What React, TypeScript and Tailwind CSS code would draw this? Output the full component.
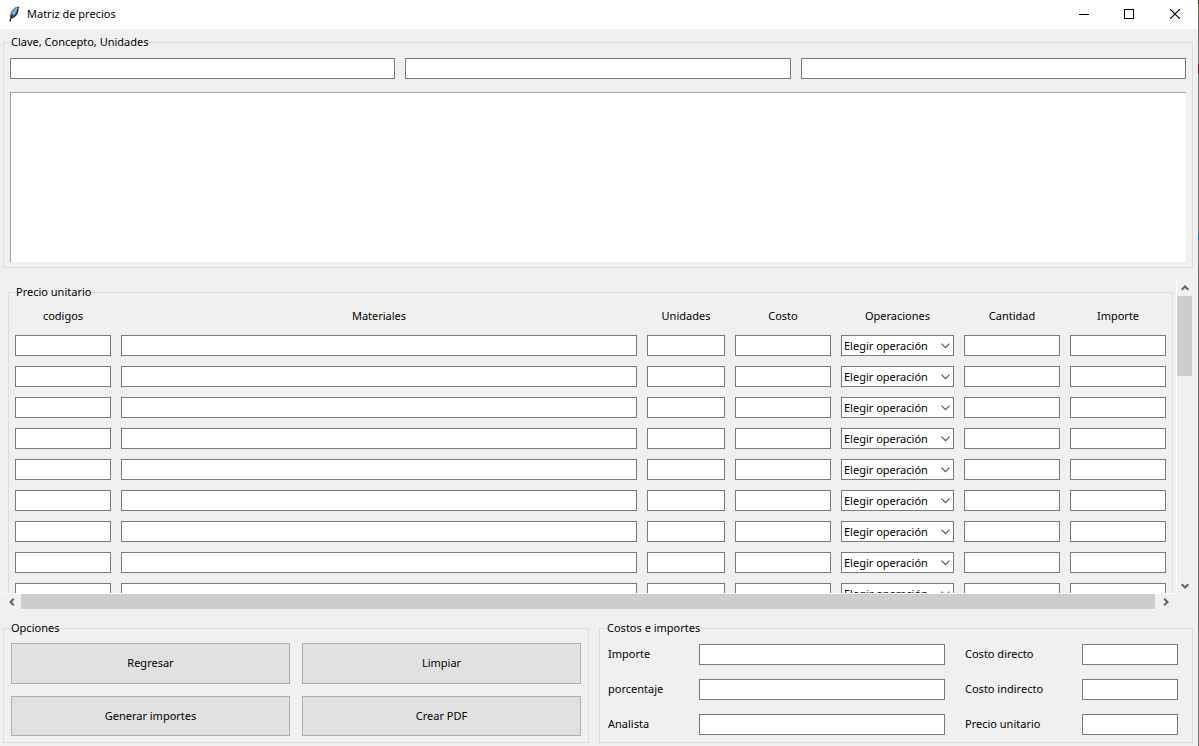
import type { ReactNode } from 'react';
import { useState } from 'react';

const field = 'block h-[21px] w-full min-w-0 border border-[#7a7a7a] bg-white px-1 outline-none focus:border-[#0078d7]';

function Group({ title, className, children }: { title: string; className: string; children: ReactNode }) {
  return (
    <fieldset className={`relative min-w-0 border border-[#dcdcdc] ${className}`}>
      <legend className="absolute -top-[9px] left-[7px] bg-[#f0f0f0] leading-4">{title}</legend>
      {children}
    </fieldset>
  );
}

function Feather() {
  return (
    <svg width="16" height="16" viewBox="0 0 16 16" aria-hidden="true">
      <path d="M12.2 .6C9.4 1.2 6.2 4.2 5.2 7.5L4.4 10.6l1.2 1.2C8.6 10.6 10.6 8 11.4 5z" fill="#5f9fe0" />
      <path d="M9.8 1.4C7.4 3 5.4 5.4 4.6 8.6l-.4 2.6" fill="none" stroke="#3a4450" strokeWidth=".8" />
      <path d="M12.4 .6 11.6 5C10.8 8.4 8.8 10.6 5.8 12" fill="none" stroke="#111" strokeWidth="1.2" />
      <path d="M10.8 2.4 6.4 8.6" stroke="#a9cdf2" strokeWidth=".9" />
      <path d="M6.6 8.4C5.2 10.6 4.4 12.6 4 15.4" fill="none" stroke="#111" strokeWidth="1.3" />
    </svg>
  );
}

function TitleBar() {
  return (
    <header className="flex h-[29px] shrink-0 items-start bg-white">
      <div className="flex h-7 flex-1 items-center gap-[5px] pl-1.5">
        <Feather />
        <h1>Matriz de precios</h1>
      </div>
      <button aria-label="Minimizar" className="flex h-[27px] w-[45px] items-center justify-center">
        <svg width="10" height="10" shapeRendering="crispEdges"><path d="M0 5h10v1H0z" /></svg>
      </button>
      <button aria-label="Maximizar" className="flex h-[27px] w-[46px] items-center justify-center">
        <svg width="10" height="10" shapeRendering="crispEdges"><path d="M.5.5h9v9h-9z" fill="none" stroke="#000" /></svg>
      </button>
      <button aria-label="Cerrar" className="flex h-[27px] w-[46px] items-center justify-center">
        <svg width="10" height="10"><path d="m0 0 10 10M10 0 0 10" stroke="#000" strokeWidth="1.2" /></svg>
      </button>
    </header>
  );
}

function Arrow({ turn, size, label }: { turn: string; size: string; label: string }) {
  return (
    <button aria-label={label} className={`flex shrink-0 items-center justify-center ${size}`}>
      <svg width="8" height="8" viewBox="0 0 8 8" className={turn}>
        <path d="M.7 5.8 4 2.5l3.3 3.3" fill="none" stroke="#606060" strokeWidth="2" />
      </svg>
    </button>
  );
}

const grid =
  'grid grid-cols-[96px_minmax(0,1fr)_78px_96px_113px_96px_96px] gap-x-2.5';
const columns = ['codigos', 'Materiales', 'Unidades', 'Costo', 'Operaciones', 'Cantidad', 'Importe'];
const operations = ['Elegir operación', 'Suma', 'Resta', 'Multiplicación', 'División'];

function Operation({ row }: { row: number }) {
  return (
    <div className="relative">
      <select
        aria-label={`Operaciones ${row}`}
        className="block h-[21px] w-full appearance-none border border-[#7a7a7a] bg-white pl-0.5 leading-[19px] outline-none"
      >
        {operations.map((o) => (
          <option key={o}>{o}</option>
        ))}
      </select>
      <svg width="9" height="6" className="pointer-events-none absolute top-2 right-1">
        <path d="M.5.7 4.5 4.7l4-4" fill="none" stroke="#505050" strokeWidth="1.1" />
      </svg>
    </div>
  );
}

function PriceTable() {
  return (
    <section className="flex h-[341px] shrink-0 flex-col pt-[11px] pr-1.5 pl-[3px]">
      <div className="flex min-h-0 flex-1">
        <div className="min-w-0 flex-1 overflow-hidden border-r border-b border-white pt-[13px] pr-[3px] pl-[5px]">
          <Group title="Precio unitario" className="px-1.5 pt-[13px] pb-2.5">
            <div className={`${grid} mb-[10px] text-center leading-[19px]`}>
              {columns.map((c) => (
                <span key={c}>{c}</span>
              ))}
            </div>
            <div className="flex flex-col gap-2.5">
              {Array.from({ length: 30 }, (_, i) => (
                <div key={i} className={grid}>
                  {columns.map((c) =>
                    c === 'Operaciones' ? (
                      <Operation key={c} row={i + 1} />
                    ) : (
                      <input key={c} aria-label={`${c} ${i + 1}`} className={field} />
                    ),
                  )}
                </div>
              ))}
            </div>
          </Group>
        </div>
        <div className="flex w-[15px] shrink-0 flex-col items-center">
          <Arrow label="Subir" size="h-[17px] w-full" turn="rotate-0" />
          <div className="h-20 w-full bg-[#cdcdcd]" />
          <div className="flex-1" />
          <Arrow label="Bajar" size="h-[17px] w-full" turn="rotate-180" />
        </div>
      </div>
      <div className="mr-[15px] flex h-[15px] shrink-0 items-center">
        <Arrow label="Izquierda" size="h-full w-[18px]" turn="-rotate-90" />
        <div className="h-full flex-1 bg-[#cdcdcd]" />
        <Arrow label="Derecha" size="h-full w-[22px]" turn="rotate-90" />
      </div>
    </section>
  );
}

const actions = ['Regresar', 'Limpiar', 'Generar importes', 'Crear PDF'];
const totals = [
  ['Importe', 'Costo directo'],
  ['porcentaje', 'Costo indirecto'],
  ['Analista', 'Precio unitario'],
];

export default function App() {
  const [notes, setNotes] = useState('');
  return (
    <div className="flex min-h-screen bg-[#f0f0f0] font-['Noto_Sans','Open_Sans',sans-serif] text-[11px] text-black">
      <main className="flex min-w-0 flex-1 flex-col">
        <TitleBar />
        <Group title="Clave, Concepto, Unidades" className="mt-[13px] mr-[5px] ml-[3px] px-1.5 pt-[15px] pb-[5px]">
          <div className="grid grid-cols-3 gap-2.5">
            <input aria-label="Clave" className={field} />
            <input aria-label="Concepto" className={field} />
            <input aria-label="Unidades" className={field} />
          </div>
          <textarea
            aria-label="Descripción"
            value={notes}
            onChange={(e) => setNotes(e.target.value)}
            className="mt-[13px] block h-[170px] w-full resize-none border-t border-l border-[#a0a0a0] bg-white p-1 outline-none"
          />
        </Group>
        <PriceTable />
        <div className="mt-[19px] mr-[5px] mb-[3px] ml-[3px] grid flex-1 grid-cols-[minmax(0,586fr)_minmax(0,594fr)] gap-2.5">
          <Group title="Opciones" className="px-[7px] pt-3.5 pb-1.5">
            <div className="grid h-full grid-cols-2 grid-rows-2 gap-3">
              {actions.map((a) => (
                <button key={a} className="border border-[#adadad] bg-[#e1e1e1] hover:border-[#0078d7] hover:bg-[#e5f1fb]">
                  {a}
                </button>
              ))}
            </div>
          </Group>
          <Group title="Costos e importes" className="pt-[15px] pr-3.5 pl-2">
            <div className="flex flex-col gap-3.5">
              {totals.map(([left, right]) => (
                <div key={left} className="grid grid-cols-[91px_minmax(0,1fr)_137px_96px] items-center">
                  <label htmlFor={left}>{left}</label>
                  <input id={left} className={field} />
                  <label htmlFor={right} className="ml-5 whitespace-nowrap">{right}</label>
                  <input id={right} className={field} />
                </div>
              ))}
            </div>
          </Group>
        </div>
      </main>
      <div className="flex w-px shrink-0 flex-col bg-[#707070]">
        <div className="h-1 bg-[#202028]" />
        <div className="h-[3px] bg-[#b06a20]" />
        <div className="mt-[57px] h-2.5 bg-[#5c1a44]" />
        <div className="mt-40 h-1.5 bg-[#2f6fb0]" />
      </div>
    </div>
  );
}
